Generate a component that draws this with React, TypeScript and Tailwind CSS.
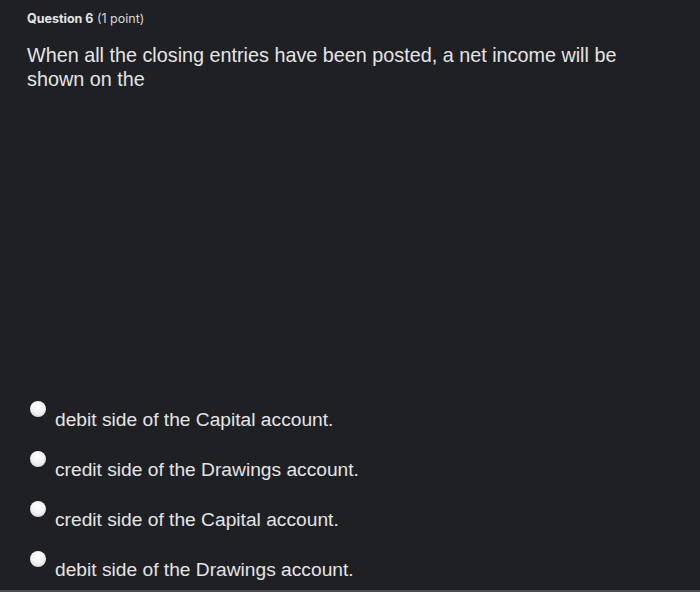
import React from 'react';

const options = [
  'debit side of the Capital account.',
  'credit side of the Drawings account.',
  'credit side of the Capital account.',
  'debit side of the Drawings account.',
];

export default function App() {
  return (
    <div className="w-[700px] h-[592px] bg-[#1f2024] flex flex-col border-b-2 border-[#4b4c50] font-['Liberation_Sans',Arial,sans-serif] text-[#e4e4e6] overflow-hidden">
      <div className="pl-[27px] pt-[10px] text-[12.5px] leading-[18px] font-['Inter',sans-serif]">
        <span className="font-bold">Question 6</span> <span className="text-[#d8d8da]">(1 point)</span>
      </div>
      <p className="pl-[27px] pr-[60px] mt-[15px] text-[19.8px] leading-[24px]">
        When all the closing entries have been posted, a net income will be shown on the
      </p>
      <div className="mt-[318px] flex flex-col gap-[28px] pl-[30px]">
        {options.map((label) => (
          <div key={label} className="flex items-start gap-[9px] h-[22px]">
            <span className="w-[16px] h-[16px] mt-[-8px] rounded-full shrink-0 bg-[radial-gradient(circle_at_50%_35%,#ffffff_0%,#f2f2f2_50%,#c8c8cc_100%)] shadow-[0_0_1px_rgba(0,0,0,0.6)]" />
            <span className="text-[19.2px] leading-[22px]">{label}</span>
          </div>
        ))}
      </div>
    </div>
  );
}
